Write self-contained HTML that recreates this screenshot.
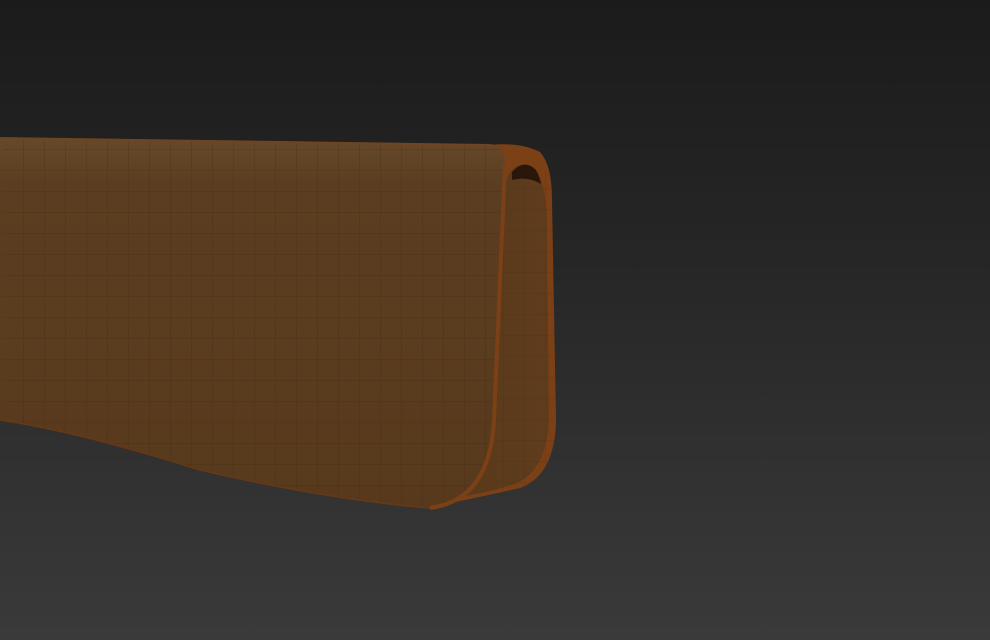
<!DOCTYPE html>
<html><head><style>html,body{margin:0;padding:0;background:#222}svg{display:block}</style></head><body>
<svg width="990" height="640" viewBox="0 0 990 640" xmlns="http://www.w3.org/2000/svg">
<defs>
<linearGradient id="bg" x1="0" y1="0" x2="0" y2="1"><stop offset="0" stop-color="#1b1b1b"/><stop offset="0.4" stop-color="#262626"/><stop offset="1" stop-color="#3a3a3a"/></linearGradient>
<linearGradient id="face" x1="0" y1="0" x2="0" y2="1"><stop offset="0" stop-color="#67492a"/><stop offset="0.12" stop-color="#5b3e21"/><stop offset="1" stop-color="#58391c"/></linearGradient>
<linearGradient id="back" x1="0" y1="0" x2="1" y2="0"><stop offset="0" stop-color="#5a391c"/><stop offset="1" stop-color="#5e3c1c"/></linearGradient>
<pattern id="grid" width="21" height="21" patternUnits="userSpaceOnUse"><path d="M21 0V21M0 21H21" stroke="#3e2812" stroke-width="1" fill="none" opacity="0.45"/></pattern>
<clipPath id="fc"><path d="M0 138 L490 145 Q505 147 505 165 L494 420 Q490 500 430 508 Q330 500 200 470 Q80 432 0 420 Z"/></clipPath>
</defs>
<rect width="990" height="640" fill="url(#bg)"/>
<path d="M490 145 Q520 142 540 152 Q552 165 552 200 L556 420 Q555 475 520 488 Q480 497 450 503 L470 480 Q490 470 492 440 L505 165 Z" fill="#7c4016"/>
<path d="M510 172 Q522 158 538 172 Q546 190 547 220 L549 420 Q547 470 515 484 Q490 492 465 496 Q488 470 492 430 L502 190 Z" fill="url(#back)"/>
<rect x="495" y="170" width="60" height="320" fill="url(#grid)" clip-path="url(#bk)" opacity="0.6"/>
<path d="M512 172 Q524 158 536 170 Q540 178 541 184 Q528 176 512 180 Z" fill="#2a170a"/>
<g clip-path="url(#fc)">
<path d="M0 138 L490 145 Q505 147 505 165 L494 420 Q490 500 430 508 Q330 500 200 470 Q80 432 0 420 Z" fill="url(#face)"/>
<rect x="0" y="130" width="560" height="400" fill="url(#grid)" transform="translate(3 3)"/>
</g>
<path d="M505 165 L494 420 Q490 500 430 508" fill="none" stroke="#7c4016" stroke-width="4"/>
<path d="M0 138 L490 145 Q505 147 508 160" fill="none" stroke="#6e4522" stroke-width="2"/>
<path d="M430 508 Q330 500 200 470 Q80 432 0 420" fill="none" stroke="#6a3814" stroke-width="1.5"/>
</svg>
</body></html>
